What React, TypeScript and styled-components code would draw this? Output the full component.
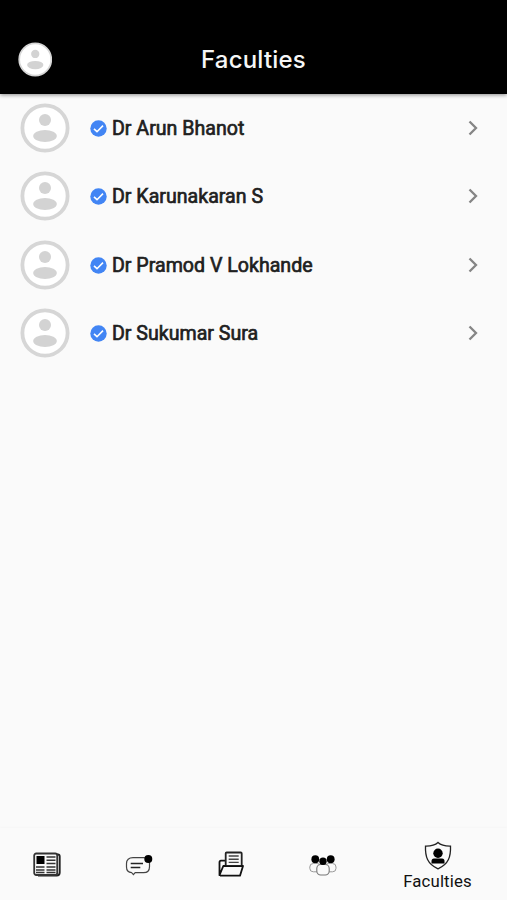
import React from "react";
import styled, { createGlobalStyle } from "styled-components";

const GlobalStyle = createGlobalStyle`
  * { box-sizing: border-box; }
  body { margin: 0; background: #fafafa; font-family: Roboto, sans-serif; }
`;

const Screen = styled.div`
  display: flex;
  flex-direction: column;
  width: 100%;
  height: 900px;
  overflow: hidden;
  background: #fafafa;
`;

const Header = styled.header`
  flex: none;
  display: grid;
  grid-template-columns: 52px 1fr 52px;
  align-items: center;
  height: 93.8px;
  padding-top: 25px;
  background: #000;
  box-shadow: 0 1px 4px rgba(0, 0, 0, 0.45);
`;

const ProfileButton = styled.button`
  display: flex;
  padding: 0;
  margin-left: 17.5px;
  border: 0;
  background: none;
`;

const Title = styled.h1`
  margin: 0;
  padding-top: 2px;
  text-align: center;
  color: #f6f6f6;
  font-family: Inter, sans-serif;
  font-size: 24px;
  font-weight: 500;
  letter-spacing: 0.2px;
  line-height: 30px;
`;

const List = styled.ul`
  flex: 1;
  margin: 0;
  padding: 0;
  list-style: none;
`;

const Row = styled.li`
  display: flex;
  align-items: center;
  height: 68.4px;
  padding: 0 22px 0 20px;
`;

const Check = styled.svg`
  flex: none;
  margin: 1px 5px 0 20px;
`;

const Name = styled.span`
  flex: 1;
  padding-top: 2px;
  color: #202020;
  font-size: 19.6px;
  font-weight: 400;
  line-height: 26px;
  white-space: nowrap;
  -webkit-text-stroke: 0.65px #202020;
`;

const TabBar = styled.nav`
  flex: none;
  display: grid;
  grid-template-columns: repeat(4, 92px) 1fr;
  height: 72px;
  padding-left: 1px;
  background: #fafafa;
  box-shadow: 0 -1px 2px rgba(0, 0, 0, 0.02);
`;

const Tab = styled.button<{ $active?: boolean }>`
  display: flex;
  flex-direction: column;
  align-items: center;
  justify-content: ${(p) => (p.$active ? "flex-start" : "center")};
  padding: ${(p) => (p.$active ? "13px 1px 0 0" : "2px 0 0")};
  border: 0;
  background: none;
  color: #111;
  font-family: inherit;
`;

const TabLabel = styled.span`
  margin-top: 1px;
  font-size: 16.8px;
  line-height: 20px;
  letter-spacing: 0.15px;
`;

function Avatar({ size, ring }: { size: number; ring: number }) {
  return (
    <svg width={size} height={size} viewBox="0 0 50 50">
      <circle cx="25" cy="25" r={24.5 - ring / 2} fill="#fff" stroke="#d6d6d6" strokeWidth={ring} />
      <circle cx="25" cy="17" r="6" fill="#d3d3d3" />
      <ellipse cx="25" cy="33" rx="11.8" ry="6" fill="#d3d3d3" />
    </svg>
  );
}

function Verified() {
  return (
    <Check width="17" height="17" viewBox="0 0 17 17">
      <circle cx="8.5" cy="8.5" r="8.2" fill="#4285f4" />
      <path d="M4 8.8 7 11.7 13 5.6" fill="none" stroke="#fff" strokeWidth="1.6" />
    </Check>
  );
}

function Chevron() {
  return (
    <svg width="24" height="24" viewBox="0 0 24 24" fill="none" stroke="#858585" strokeWidth="2.3">
      <path d="m8.5 5.5 6.5 6.5-6.5 6.5" />
    </svg>
  );
}

function NewsIcon() {
  return (
    <svg width="30" height="30" viewBox="0 0 30 30" fill="none">
      <path d="M25 4.5h1q1.7 0 1.7 2v16q0 3-3 3H6" stroke="#222" strokeWidth="1.9" />
      <rect x="2.2" y="3.5" width="23" height="21.5" rx="2" fill="#fafafa" stroke="#333" strokeWidth="1.8" />
      <path d="M4.5 6h8v8h-8z" fill="#000" />
      <path d="M14.5 7h9M14.5 10.3h9M14.5 13.6h9M4 17h8.5M14.5 17h9M4 19.9h8.5M14.5 19.9h9M4 22.6h8.5M14.5 22.6h9" stroke="#333" strokeWidth="1.5" />
    </svg>
  );
}

function ChatIcon() {
  return (
    <svg width="30" height="30" viewBox="0 0 30 30" fill="none">
      <path d="M9 7.7h10.5c4 0 6 2.3 6 5.5v3.5c0 4-2 6-6 6h-8.3l-1.8 2-1.7-2C4 22.3 2.5 20.2 2.5 17v-3.5c0-3.7 2.3-5.8 6.5-5.8Z" stroke="#444" strokeWidth="1.2" />
      <path d="M6.7 13.5H19M6.7 17.5h9.6" stroke="#222" strokeWidth="1.6" />
      <circle cx="24.3" cy="9" r="4" fill="#000" />
    </svg>
  );
}

function FolderIcon() {
  return (
    <svg width="30" height="30" viewBox="0 0 30 30" fill="none" strokeLinejoin="round">
      <path d="M9 10.7H5q-1.5 0-1.5 1.5v13L7.3 16H27l-3 9.7H4" stroke="#111" strokeWidth="1.8" />
      <path d="M9.7 15.5V3.5q0-1 1-1h14q1 0 1 1v12" fill="#fafafa" stroke="#222" strokeWidth="1.8" />
      <path d="M12.7 6h10M12.7 9.2h10M12.7 12.4h10" stroke="#444" strokeWidth="1.4" />
      <path d="M7.4 16H27" stroke="#111" strokeWidth="1.7" />
    </svg>
  );
}

function GroupIcon() {
  return (
    <svg width="30" height="30" viewBox="0 0 30 30">
      <rect x="1.8" y="13.5" width="11" height="8.3" rx="3.5" fill="#fafafa" stroke="#999" />
      <rect x="17" y="13.5" width="11" height="8.3" rx="3.5" fill="#fafafa" stroke="#999" />
      <rect x="8.8" y="14.5" width="12.4" height="10.5" rx="4" fill="#fafafa" stroke="#777" strokeWidth="1.1" />
      <circle cx="7.3" cy="9.2" r="3.9" />
      <circle cx="22.7" cy="9.2" r="3.9" />
      <circle cx="15" cy="11.3" r="3.7" />
    </svg>
  );
}

function ShieldIcon() {
  return (
    <svg width="30" height="29" viewBox="0 0 30 29">
      <path d="M15 1.5c-3 2.8-7.4 3.7-12.5 3.6-.4 10.4 1.7 17.8 12.5 22.8 10.8-5 12.9-12.4 12.5-22.8C22.4 5.2 18 4.3 15 1.5Z" fill="none" stroke="#222" strokeWidth="1.3" />
      <circle cx="15" cy="12.2" r="4.7" />
      <path d="M8.5 22.6v-2.700q0-2.500 2.500-2.500h8q2.500 0 2.500 2.500v2.700Z" />
    </svg>
  );
}

const faculties = ["Dr Arun Bhanot", "Dr Karunakaran S", "Dr Pramod V Lokhande", "Dr Sukumar Sura"];

export default function App() {
  return (
    <Screen>
      <GlobalStyle />
      <Header>
        <ProfileButton aria-label="Profile"><Avatar size={35} ring={2.5} /></ProfileButton>
        <Title>Faculties</Title>
      </Header>
      <List>
        {faculties.map((name) => (
          <Row key={name}>
            <Avatar size={50} ring={3.8} />
            <Verified />
            <Name>{name}</Name>
            <Chevron />
          </Row>
        ))}
      </List>
      <TabBar>
        <Tab aria-label="News"><NewsIcon /></Tab>
        <Tab aria-label="Messages"><ChatIcon /></Tab>
        <Tab aria-label="Files"><FolderIcon /></Tab>
        <Tab aria-label="Groups"><GroupIcon /></Tab>
        <Tab $active>
          <ShieldIcon />
          <TabLabel>Faculties</TabLabel>
        </Tab>
      </TabBar>
    </Screen>
  );
}
